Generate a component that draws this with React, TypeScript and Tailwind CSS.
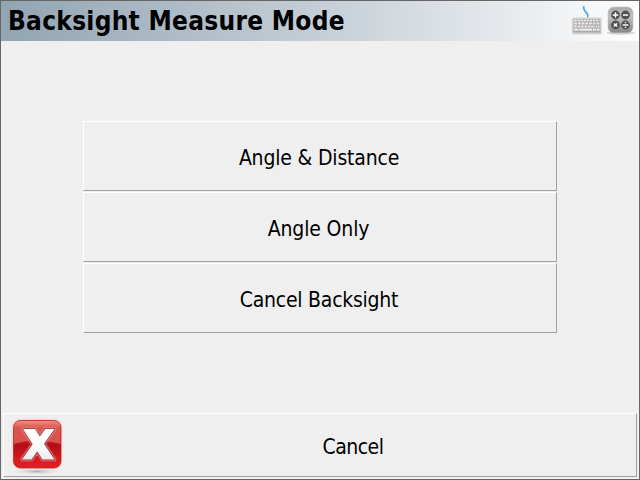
const font = "font-['DejaVu_Sans_Condensed','DejaVu_Sans',sans-serif] [font-stretch:condensed]";
const bevel = "border border-t-white border-l-white border-r-[#a0a0a0] border-b-[#a0a0a0] bg-[#efefef]";

function KeyboardIcon() {
  return (
    <svg width="32" height="34" viewBox="0 0 32 34" className="block">
      <defs>
        <linearGradient id="kb" x1="0" y1="0" x2="0" y2="1">
          <stop offset="0" stopColor="#cfcfcf" />
          <stop offset="1" stopColor="#bcbcbc" />
        </linearGradient>
      </defs>
      <path d="M12.700 3c-.3 3 .3 4.500 2 5.800 1.800 1.400 2.600 2.400 2 5.700" fill="none" stroke="#46a3d6" strokeWidth="1.500" />
      <rect x=".7" y="14.200" width="30.200" height="17.400" rx="1.800" fill="#ddd" />
      <rect x="1.700" y="15.200" width="28.200" height="15.400" rx="1" fill="url(#kb)" />
      <rect x="2.700" y="16" width="26.200" height="12.800" fill="#a5a5a5" />
      <g stroke="#ececec" strokeWidth="2.200">
        <path d="M3.200 17.500h25.300" strokeDasharray="2.300 .8" />
        <path d="M3.200 20.500h25.300" strokeDasharray="2.900 .8" />
        <path d="M3.200 23.500h25.300" strokeDasharray="2.600 .8" />
        <path d="M3.200 26.700h4.300M8.300 26.700h13M22.100 26.700h2.800M25.700 26.700h2.800" />
      </g>
      <path d="M24.300 19v5.500" stroke="#aaa" strokeWidth=".8" />
    </svg>
  );
}

function CalculatorIcon() {
  return (
    <svg width="28" height="34" viewBox="0 0 28 34" className="block">
      <defs>
        <linearGradient id="calc" x1="0" y1="0" x2="0" y2="1">
          <stop offset="0" stopColor="#a8a8a8" />
          <stop offset=".35" stopColor="#c2c2c2" />
          <stop offset="1" stopColor="#858585" />
        </linearGradient>
      </defs>
      <ellipse cx="13.500" cy="30" rx="14.500" ry="1.700" fill="#bbb" opacity=".55" />
      <rect x="1.200" y="4.200" width="24.600" height="25.600" rx="5.500" fill="url(#calc)" stroke="#aaa" strokeWidth=".7" />
      <g fill="#505050">
        <circle cx="8.500" cy="12" r="4.400" />
        <circle cx="18.500" cy="12" r="4.400" />
        <circle cx="8.500" cy="22" r="4.400" />
        <circle cx="18.500" cy="22" r="4.400" />
      </g>
      <g stroke="#fff" strokeWidth="1.400">
        <path d="M5.700 12h5.600M8.500 9.200v5.600M15.900 12h5.200M6.900 20.400l3.200 3.200M10.100 20.400l-3.200 3.200M15.700 22h5.600" />
        <path d="M17.800 19.600h1.400M17.800 24.400h1.400" />
      </g>
    </svg>
  );
}

function CloseIcon() {
  return (
    <svg width="56" height="60" viewBox="0 0 56 60" className="block">
      <defs>
        <linearGradient id="red" x1="0" y1="0" x2="0" y2="1">
          <stop offset="0" stopColor="#cc2526" />
          <stop offset=".49" stopColor="#bd1519" />
          <stop offset=".5" stopColor="#b20e13" />
          <stop offset="1" stopColor="#e81e25" />
        </linearGradient>
        <linearGradient id="gloss" x1="0" y1="0" x2="0" y2="1">
          <stop offset="0" stopColor="#ef8b83" />
          <stop offset=".3" stopColor="#dc5550" />
          <stop offset="1" stopColor="#d8504d" />
        </linearGradient>
        <linearGradient id="cross" x1="0" y1="0" x2="0" y2="1">
          <stop offset=".5" stopColor="#fff" />
          <stop offset="1" stopColor="#ebebeb" />
        </linearGradient>
        <radialGradient id="shade">
          <stop offset="0" stopColor="#aaa" />
          <stop offset="1" stopColor="#efefef" stopOpacity="0" />
        </radialGradient>
      </defs>
      <ellipse cx="28" cy="54.500" rx="27" ry="3.500" fill="url(#shade)" />
      <rect x="2.500" y="1.500" width="51" height="51" rx="8.500" fill="#f6c5b8" opacity=".45" />
      <rect x="4.500" y="3.500" width="47.500" height="47.500" rx="7" fill="url(#red)" stroke="#b52023" strokeOpacity=".7" />
      <path d="M5 27V10.500Q5 4 11.500 4H45q6.500 0 6.500 6.500V27Q40 23.500 28 23.500T5 27z" fill="url(#gloss)" />
      <path d="M14 12h12l4.800 7.500L36.300 12H45.500L35 26.700 45.500 42.500H33.500L28.300 34.500 22.500 42.500H13L23.700 27.200z" fill="none" stroke="#e58c88" strokeWidth="4" strokeLinejoin="round" opacity=".6" />
      <path d="M14 12h12l4.800 7.500L36.300 12H45.500L35 26.700 45.500 42.500H33.500L28.300 34.500 22.500 42.500H13L23.700 27.200z" fill="url(#cross)" stroke="#963034" strokeWidth="1.300" strokeLinejoin="round" paintOrder="stroke" />
    </svg>
  );
}

function Choice({ label, spacing }: { label: string; spacing: string }) {
  return (
    <button className={`${bevel} flex h-[70px] w-full items-center justify-center pt-[3px] text-[21px] leading-6 ${spacing}`}>
      <span>{label}</span>
    </button>
  );
}

export default function App() {
  return (
    <div className={`${font} flex h-[480px] w-[640px] flex-col border border-[#666] bg-[#efefef] text-black`}>
      <header className="flex h-10 shrink-0 items-center justify-between bg-linear-to-r from-[#92a5b3] via-[#c5ced6] via-50% to-[#fefefe] pl-[7px] pr-1">
        <h1 className="whitespace-nowrap text-[26px] font-bold leading-8 tracking-[0.28px]">Backsight Measure Mode</h1>
        <div className="flex h-10 items-start gap-1 pt-[2px]">
          <KeyboardIcon />
          <CalculatorIcon />
        </div>
      </header>
      <main className="flex flex-1 flex-col gap-px pl-[82px] pr-[82px] pt-20">
        <Choice label="Angle &amp; Distance" spacing="tracking-[-0.18px] pr-[2px]" />
        <Choice label="Angle Only" spacing="tracking-[-0.15px] pr-[3px]" />
        <Choice label="Cancel Backsight" spacing="tracking-[-0.24px] pr-[2px]" />
      </main>
      <button className={`${bevel} mb-[2px] ml-[2px] mr-[2px] flex h-16 shrink-0 items-center pl-[5px]`}>
        <span className="pt-1"><CloseIcon /></span>
        <span className="flex-1 pl-[5px] pt-[3px] text-center text-[21px] leading-6 tracking-[-0.5px]">Cancel</span>
      </button>
    </div>
  );
}
